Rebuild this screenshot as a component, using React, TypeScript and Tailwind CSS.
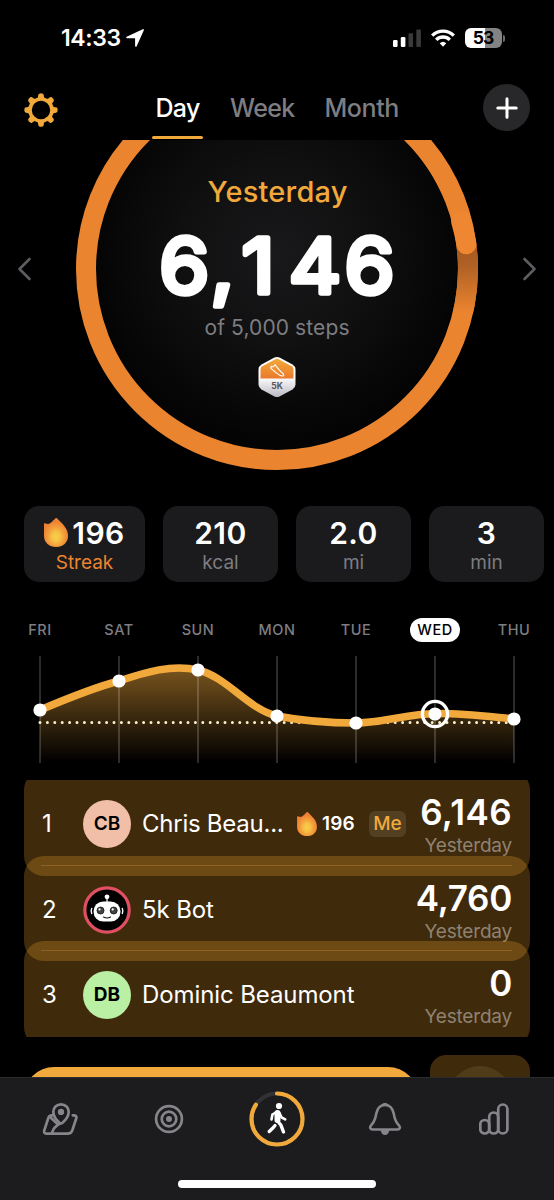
import type { ReactNode } from "react";
import clsx from "clsx";

type Stat = { value: string; label: string; streak?: boolean };

const STATS: Stat[] = [
  { value: "196", label: "Streak", streak: true },
  { value: "210", label: "kcal" },
  { value: "2.0", label: "mi" },
  { value: "3", label: "min" },
];

// y is the position inside the 107px tall chart
const DAYS = [
  { label: "FRI", y: 54 },
  { label: "SAT", y: 25 },
  { label: "SUN", y: 14 },
  { label: "MON", y: 60 },
  { label: "TUE", y: 67 },
  { label: "WED", y: 58, selected: true },
  { label: "THU", y: 63 },
];

const TREND =
  "M40 54C66 43 92 32 119 25C146 16 172 8 198 14C227 21 248 53 277 60C303 65 330 67 356 67C382 67 408 58 435 57.5C461 57 488 60.500 514 63";

function Flame({ className }: { className?: string }) {
  return (
    <svg viewBox="0 0 24 29" className={className} aria-hidden="true">
      <defs>
        <radialGradient id="flame" cx="0.5" cy="0.64" r="0.52">
          <stop offset="0" stopColor="#f8d04a" />
          <stop offset="0.35" stopColor="#f6bf45" />
          <stop offset="0.62" stopColor="#f3a03c" />
          <stop offset="1" stopColor="#ee8233" />
        </radialGradient>
      </defs>
      <path
        d="M0 6.200C0 5.300 1 5 1.800 5.500C3.500 6.200 5 6 6.400 5C8.300 3.600 9.500 2 11.300 .5C12.200 -.2 13 .1 13.700 1C16 3.600 18.500 5.500 20.500 8.300C23 11.800 24 14.500 24 18C24 24.500 19 29 12.200 29C5.300 29 0 24.500 0 18Z"
        fill="url(#flame)"
      />
    </svg>
  );
}

function StatusBar() {
  return (
    <div className="flex h-[76px] shrink-0 items-center justify-between pr-[49px] pl-[61px]">
      <div className="flex items-center gap-[5px]">
        <span className="text-[23px] leading-none font-semibold tracking-[-0.400px]">14:33</span>
        <svg viewBox="0 0 18 18" className="size-[18px]" aria-hidden="true">
          <path
            d="M17.100 .9L9.900 17V8.500H1Z"
            fill="#fff"
            stroke="#fff"
            strokeWidth="1.600"
            strokeLinejoin="round"
          />
        </svg>
      </div>
      <div className="flex items-center">
        <svg viewBox="0 0 28 19" className="mr-[10px] h-[19px] w-[28px]" aria-hidden="true">
          <rect x="0" y="11" width="4.600" height="7" rx="1.200" fill="#fff" />
          <rect x="7.800" y="8" width="4.600" height="10" rx="1.200" fill="#fff" />
          <rect x="15.500" y="4.200" width="4.600" height="13.800" rx="1.200" fill="#3a3a3c" />
          <rect x="23.300" y="0.500" width="4.600" height="17.500" rx="1.200" fill="#3a3a3c" />
        </svg>
        <svg viewBox="0 0 24 18" className="mr-[10px] h-[18px] w-[24px]" fill="none" stroke="#fff" strokeWidth="3.300" aria-hidden="true">
          <path d="M1.200 6.600A15.300 15.300 0 0 1 22.800 6.600" />
          <path d="M5.200 10.800A9.600 9.600 0 0 1 18.800 10.800" />
          <path d="M8.700 14.300A4.800 4.800 0 0 1 15.300 14.300L12 17.700Z" fill="#fff" stroke="none" />
        </svg>
        <div className="flex h-[20px] w-[37px] items-center justify-center rounded-[6px] bg-linear-to-r from-white from-53% to-[#838383] to-53% text-[17.500px] leading-none font-bold tracking-[-1px] text-black">
          53
        </div>
        <div className="ml-[1.500px] h-[7px] w-[2px] rounded-r-full bg-[#6b6b6b]" />
      </div>
    </div>
  );
}

function GearIcon() {
  return (
    <svg viewBox="-17 -17 34 34" className="size-[34px]" aria-hidden="true">
      {[0, 45, 90, 135, 180, 225, 270, 315].map((angle) => (
        <path
          key={angle}
          d="M-5 -10C-3 -12 -2.900 -13 -2.700 -15.200Q-2.400 -16.700 0 -16.700Q2.400 -16.700 2.700 -15.200C2.900 -13 3 -12 5 -10Z"
          fill="#f2a93b"
          transform={`rotate(${angle})`}
        />
      ))}
      <circle r="11" fill="#000" stroke="#f2a93b" strokeWidth="3.600" />
    </svg>
  );
}

function Header() {
  return (
    <header className="flex h-[64px] shrink-0 items-start justify-between pr-[24px] pl-[24px]">
      <button type="button" aria-label="Settings" className="mt-[17px]">
        <GearIcon />
      </button>
      <nav className="ml-[10px] flex text-[25px] leading-[30px] font-medium text-[#7d7d82]">
        <div className="mr-[27px] flex w-[51px] flex-col items-center pt-[17px] text-white">
          <span className="tracking-[-0.700px]">Day</span>
          <span className="mt-[13px] h-[3px] w-full rounded-full bg-[#f2a93b]" />
        </div>
        <div className="mr-[30px] pt-[17px] tracking-[-0.700px]">Week</div>
        <div className="pt-[17px] tracking-[-0.400px]">Month</div>
      </nav>
      <button
        type="button"
        aria-label="Add"
        className="mt-[8px] flex size-[47px] items-center justify-center rounded-full bg-[#28282a]"
      >
        <svg viewBox="0 0 22 22" className="size-[22px]" stroke="#fff" strokeWidth="3" strokeLinecap="round" aria-hidden="true">
          <path d="M11 1.800V20.200M1.800 11H20.200" />
        </svg>
      </button>
    </header>
  );
}

function StepsBadge() {
  return (
    <g>
      <defs>
        <linearGradient id="badge-top" x1="0" y1="0" x2="0" y2="1">
          <stop offset="0" stopColor="#f2a93b" />
          <stop offset="1" stopColor="#ea7a2c" />
        </linearGradient>
        <linearGradient id="badge-base" x1="0" y1="0" x2="0" y2="1">
          <stop offset="0.5" stopColor="#fff" />
          <stop offset="1" stopColor="#b9b9c4" />
        </linearGradient>
      </defs>
      <path
        d="M274.500 217.500Q277 216.300 279.500 217.500L292.500 224.500Q295.500 226.300 295.500 229.500V244.500Q295.500 247.700 292.500 249.500L279.500 256.500Q277 257.700 274.500 256.500L261.500 249.500Q258.500 247.700 258.500 244.500V229.500Q258.500 226.300 261.500 224.500Z"
        fill="url(#badge-base)"
      />
      <path
        d="M275.300 219.200Q277 218.300 278.700 219.200L291.700 226.200Q293.500 227.300 293.500 229.500V238.500H260.500V229.500Q260.500 227.300 262.300 226.200Z"
        fill="url(#badge-top)"
      />
      <path
        d="M271.200 226.200Q272.600 227.300 274 226L275.200 224.700L276.800 227.200L281.500 232.300Q283.600 233.600 283.700 235.300Q282.700 236.600 280.200 235.600L276 232.600L270.700 228.200Z"
        fill="none"
        stroke="#fff"
        strokeWidth="1.100"
        strokeLinejoin="round"
      />
      <text x="277" y="249" textAnchor="middle" className="fill-[#55555c] font-['Inter'] text-[8.500px] font-bold">
        5K
      </text>
    </g>
  );
}

function StepsRing() {
  return (
    <section className="h-[366px] shrink-0">
      <svg viewBox="0 0 554 340" className="h-[340px] w-[554px]">
        <defs>
          <radialGradient id="dial" cx="0.5" cy="0.46" r="0.5">
            <stop offset="0" stopColor="#19191b" />
            <stop offset="0.5" stopColor="#101011" />
            <stop offset="1" stopColor="#040405" />
          </radialGradient>
          <linearGradient id="tail" gradientUnits="userSpaceOnUse" x1="0" y1="104" x2="0" y2="172">
            <stop offset="0" stopColor="#a4591f" />
            <stop offset="0.3" stopColor="#ae6025" />
            <stop offset="1" stopColor="#eb842f" />
          </linearGradient>
        </defs>
        <circle cx="277" cy="129" r="185" fill="url(#dial)" />
        <circle cx="277" cy="129" r="191" fill="none" stroke="#eb842f" strokeWidth="20" />
        <path d="M466.300 104A191 191 0 0 1 463 172" fill="none" stroke="url(#tail)" strokeWidth="20" />
        <path d="M461 81A191 191 0 0 1 466.400 104.300" fill="none" stroke="#ee8632" strokeWidth="20" strokeLinecap="round" />

        <g fill="none" stroke="#5d5d61" strokeWidth="2.600" strokeLinecap="round" strokeLinejoin="round">
          <path d="M29.500 119L19.500 129L29.500 139" />
          <path d="M524.500 119L534.500 129L524.500 139" />
        </g>

        <text x="277.500" y="62" textAnchor="middle" textLength="140" className="fill-[#f2a93b] font-['Inter'] text-[29px] font-medium">
          Yesterday
        </text>
        <text
          x="150.300 198.800 228 272.600 325"
          y="153.500"
          transform="scale(1.06 1)"
          strokeWidth="5.500"
          strokeLinejoin="round"
          className="fill-white stroke-white font-['Inter'] text-[76px] font-normal"
        >
          6,146
        </text>
        <text x="277" y="195" textAnchor="middle" textLength="145" className="fill-[#7d7d82] font-['Inter'] text-[21px]">
          of 5,000 steps
        </text>
        <StepsBadge />
      </svg>
    </section>
  );
}

function StatCards() {
  return (
    <section className="flex shrink-0 gap-[18px] pl-[24px]">
      {STATS.map((stat) => (
        <div
          key={stat.label}
          className={clsx(
            "flex h-[76px] shrink-0 flex-col items-center rounded-[15px] bg-[#1b1b1d] pt-[9px]",
            stat.streak ? "w-[121px]" : "w-[115px]",
          )}
        >
          <div className="flex h-[35px] items-center gap-[4px] text-[30px] leading-[34px] font-semibold tracking-[0.500px]">
            {stat.streak && <Flame className="h-[29px] w-[24px]" />}
            <span>{stat.value}</span>
          </div>
          <div className={clsx("text-[19px] leading-[25px]", stat.streak ? "text-[#eb842f]" : "text-[#7d7d82]")}>
            {stat.label}
          </div>
        </div>
      ))}
    </section>
  );
}

function WeekChart() {
  return (
    <section className="mt-[36px] shrink-0">
      <div className="grid h-[24px] grid-cols-7 items-center px-[0.500px]">
        {DAYS.map((day) => (
          <div key={day.label} className="flex justify-center">
            <span
              className={clsx(
                "text-[14.500px] leading-[24px] font-medium tracking-[0.500px]",
                day.selected ? "rounded-full bg-white px-[7px] text-black" : "text-[#7d7d82]",
              )}
            >
              {day.label}
            </span>
          </div>
        ))}
      </div>
      <svg viewBox="0 0 554 107" className="mt-[14px] block h-[107px] w-[554px]">
        <defs>
          <linearGradient id="area" gradientUnits="userSpaceOnUse" x1="0" y1="12" x2="0" y2="106">
            <stop offset="0" stopColor="#f2a93b" stopOpacity="0.5" />
            <stop offset="1" stopColor="#f2a93b" stopOpacity="0" />
          </linearGradient>
        </defs>
        <path d={`${TREND}V106H40Z`} fill="url(#area)" />
        {DAYS.map((day, i) => (
          <path key={day.label} d={`M${40 + i * 79} 0V107`} stroke="#fff" strokeOpacity="0.22" strokeWidth="1.600" />
        ))}
        <path d="M40 66.500H514" stroke="#fdf0c8" strokeWidth="3" strokeLinecap="round" strokeDasharray="0 7.400" />
        <path d={TREND} fill="none" stroke="#f2a93b" strokeWidth="7.500" />
        {DAYS.map((day, i) => (
          <circle key={day.label} cx={40 + i * 79} cy={day.y} r={6.6} fill="#fff" />
        ))}
        <circle cx="435" cy="58" r="12.600" fill="none" stroke="#fff" strokeWidth="3.400" />
      </svg>
    </section>
  );
}

function BotAvatar() {
  return (
    <svg viewBox="0 0 48 48" className="size-[48px]" aria-hidden="true">
      <circle cx="24" cy="24" r="22.200" fill="#000" stroke="#e04f62" strokeWidth="3.200" />
      <path d="M24 10V16" stroke="#fff" strokeWidth="1.200" />
      <circle cx="24" cy="10.800" r="2.400" fill="#fff" />
      <rect x="10.500" y="15.500" width="27" height="20" rx="9.800" fill="#fff" />
      <path d="M8.700 22.500Q7.600 25 8.700 27.500M39.300 22.500Q40.400 25 39.300 27.500" fill="none" stroke="#fff" strokeWidth="1.400" strokeLinecap="round" />
      <circle cx="17.500" cy="24.500" r="3.500" fill="#444" stroke="#111" strokeWidth="0.800" />
      <circle cx="30.700" cy="24.500" r="3.500" fill="#444" stroke="#111" strokeWidth="0.800" />
      <circle cx="16.500" cy="23.400" r="1.100" fill="#fff" />
      <circle cx="29.700" cy="23.400" r="1.100" fill="#fff" />
      <path d="M20.500 31Q24 33 27.500 31" fill="none" stroke="#111" strokeWidth="1.100" strokeLinecap="round" />
    </svg>
  );
}

function Initials({ className, children }: { className: string; children: ReactNode }) {
  return (
    <span className={clsx("flex size-[48px] items-center justify-center rounded-full text-[19px] text-black", className)}>
      {children}
    </span>
  );
}

type RowProps = {
  rank: number;
  avatar: ReactNode;
  name: string;
  steps: string;
  last?: boolean;
  nameClass: string;
  children?: ReactNode;
};

// The translucent backgrounds bleed 10px past each row, so neighbours overlap
function LeaderboardRow({ rank, avatar, name, steps, last, nameClass, children }: RowProps) {
  return (
    <div className="relative flex h-[85.700px] items-center px-[18px] pt-[2px]">
      <div className="absolute inset-x-0 -inset-y-[10px] rounded-[20px] bg-[#f3a42a]/26" />
      {!last && <div className="absolute right-[18px] bottom-0 left-[17px] h-px bg-[#8a6230]/60" />}
      <span className="relative w-[41px] text-[24px] leading-none">{rank}</span>
      <span className="relative mr-[11px]">{avatar}</span>
      <span className={clsx("relative text-[24px] leading-[30px] whitespace-nowrap", nameClass)}>{name}</span>
      {children}
      <div className="relative ml-auto flex flex-col items-end pt-[5px]">
        <span
          className={clsx(
            "text-[35px] leading-[35px] font-semibold",
            rank === 1 ? "tracking-[0.400px]" : "tracking-[-0.300px]",
          )}
        >
          {steps}
        </span>
        <span className="mt-[4px] text-[19px] leading-[24px] tracking-[-0.200px] text-[#8f8271]">Yesterday</span>
      </div>
    </div>
  );
}

function Leaderboard() {
  return (
    <section className="mx-[24px] mt-[17px] h-[257px] shrink-0 overflow-hidden">
      <LeaderboardRow
        rank={1}
        avatar={<Initials className="bg-[#f1bfa7] font-semibold">CB</Initials>}
        name="Chris Beau..."
        steps="6,146"
        nameClass="w-[155px] tracking-[-0.250px]"
      >
        <Flame className="relative mr-[5px] h-[24px] w-[20px]" />
        <span className="relative w-[47px] text-[19px] leading-none font-semibold tracking-[0.200px]">196</span>
        <span className="relative flex h-[26px] w-[37px] items-center justify-center rounded-[6px] bg-[#534023] text-[19px] font-medium text-[#f2a93b]">
          Me
        </span>
      </LeaderboardRow>
      <LeaderboardRow rank={2} avatar={<BotAvatar />} name="5k Bot" steps="4,760" nameClass="tracking-[-0.100px]" />
      <LeaderboardRow
        rank={3}
        avatar={<Initials className="bg-[#b9f0a3] font-bold">DB</Initials>}
        name="Dominic Beaumont"
        steps="0"
        nameClass="tracking-[-0.100px]"
        last
      />
    </section>
  );
}

function PeekingActions() {
  return (
    <div className="mt-[18px] flex h-[22px] shrink-0 items-start gap-[12px] overflow-hidden pl-[24px]">
      <div className="mt-[12px] h-[60px] w-[394px] rounded-[30px] bg-[#f2a93b]" />
      <div className="flex h-[100px] w-[100px] justify-center rounded-[16px] bg-[#3f2a0b] pt-[11px]">
        <div className="size-[64px] rounded-full bg-[#513c1a]" />
      </div>
    </div>
  );
}

function MapIcon() {
  return (
    <svg viewBox="0 0 36 34" className="h-[34px] w-[36px]" fill="none" stroke="#85858a" strokeWidth="2.700" strokeLinecap="round" strokeLinejoin="round" aria-hidden="true">
      <path d="M10.500 13.300Q7.200 13 6.300 16L2.300 28.300Q1.400 31.600 4.500 31.600H25.500Q29.300 31.600 30.300 28.300L34.200 16.500Q35.200 13.300 31.500 13.300H30.800" />
      <path d="M19 2.300C14.500 2.300 11.300 5.500 11.300 9.800C11.300 14.500 14.300 18 17.500 20.700Q19 21.900 20.500 20.700C23.700 18 26.700 14.500 26.700 9.800C26.700 5.500 23.500 2.300 19 2.300Z" />
      <circle cx="19" cy="9.900" r="1.800" fill="#85858a" />
      <path d="M8 15L15.500 22" />
      <path d="M18 21.500Q11.500 25 10 31" />
    </svg>
  );
}

function TargetIcon() {
  return (
    <svg viewBox="0 0 30 30" className="size-[30px]" fill="none" stroke="#85858a" strokeWidth="2.700" aria-hidden="true">
      <circle cx="15" cy="15" r="12.900" />
      <circle cx="15" cy="15" r="7.300" />
      <circle cx="15" cy="15" r="3" fill="#85858a" stroke="none" />
    </svg>
  );
}

function WalkIcon() {
  return (
    <svg viewBox="-28 -28 56 56" className="size-[56px]" fill="none" aria-hidden="true">
      <circle r="25.500" stroke="#323234" strokeWidth="4" />
      <circle
        r="25.500"
        pathLength="100"
        strokeDasharray="84.500 100"
        transform="rotate(-90)"
        stroke="#f2a93b"
        strokeWidth="4.200"
        strokeLinecap="round"
      />
      <circle cx="2" cy="-13" r="3.100" fill="#fff" />
      <g stroke="#fff" strokeLinecap="round" strokeLinejoin="round">
        <path d="M0.500 -6L0.500 1" strokeWidth="6" />
        <path d="M-0.500 -7L-4.600 -4.500L-5.500 0.500" strokeWidth="2.600" />
        <path d="M2.500 -6L4.500 -1.700L8.200 0.400" strokeWidth="2.600" />
        <path d="M0.500 2L4 6.300L6.500 13" strokeWidth="3.400" />
        <path d="M-2 6.500L-3.600 8.500L-7.800 12.500" strokeWidth="3.300" />
      </g>
    </svg>
  );
}

function BellIcon() {
  return (
    <svg viewBox="0 0 34 34" className="size-[34px]" fill="none" stroke="#85858a" strokeWidth="2.600" strokeLinejoin="round" aria-hidden="true">
      <path d="M17 3C11.500 3 9.200 7 8.300 11.500C7.400 16.500 7 19 4.300 21.800C2.300 23.800 1.800 24.600 2.200 26Q2.700 27.500 4.800 27.500H29.200Q31.300 27.500 31.800 26C32.200 24.600 31.700 23.800 29.700 21.800C27 19 26.600 16.500 25.700 11.500C24.800 7 22.500 3 17 3Z" />
      <path d="M14 2.500Q17 0 20 2.500Z" fill="#85858a" strokeWidth="1" />
      <path d="M12.500 28H21.500Q20.500 33 17 33Q13.500 33 12.500 28Z" fill="#85858a" stroke="none" />
    </svg>
  );
}

function BarsIcon() {
  return (
    <svg viewBox="0 0 30 32" className="h-[32px] w-[30px]" fill="none" stroke="#85858a" strokeWidth="2.700" aria-hidden="true">
      <rect x="1.300" y="17" width="8.900" height="13.500" rx="4.400" />
      <rect x="10.200" y="9.500" width="9" height="21" rx="4.500" />
      <rect x="19.200" y="1.500" width="9.200" height="29" rx="4.600" />
    </svg>
  );
}

function TabBar() {
  return (
    <footer className="flex h-[123px] shrink-0 flex-col items-center border-t border-[#2c2c2e] bg-[#1c1c1e]">
      <div className="grid h-[81px] w-full grid-cols-[6px_repeat(5,1fr)_6px] items-center justify-items-center">
        <span />
        <MapIcon />
        <TargetIcon />
        <WalkIcon />
        <BellIcon />
        <BarsIcon />
        <span />
      </div>
      <div className="mt-[21px] h-[8px] w-[198px] rounded-full bg-white" />
    </footer>
  );
}

export default function App() {
  return (
    <main className="flex h-[1200px] w-[554px] flex-col overflow-hidden bg-black font-['Inter',sans-serif] text-white">
      <StatusBar />
      <Header />
      <StepsRing />
      <StatCards />
      <WeekChart />
      <Leaderboard />
      <PeekingActions />
      <TabBar />
    </main>
  );
}
